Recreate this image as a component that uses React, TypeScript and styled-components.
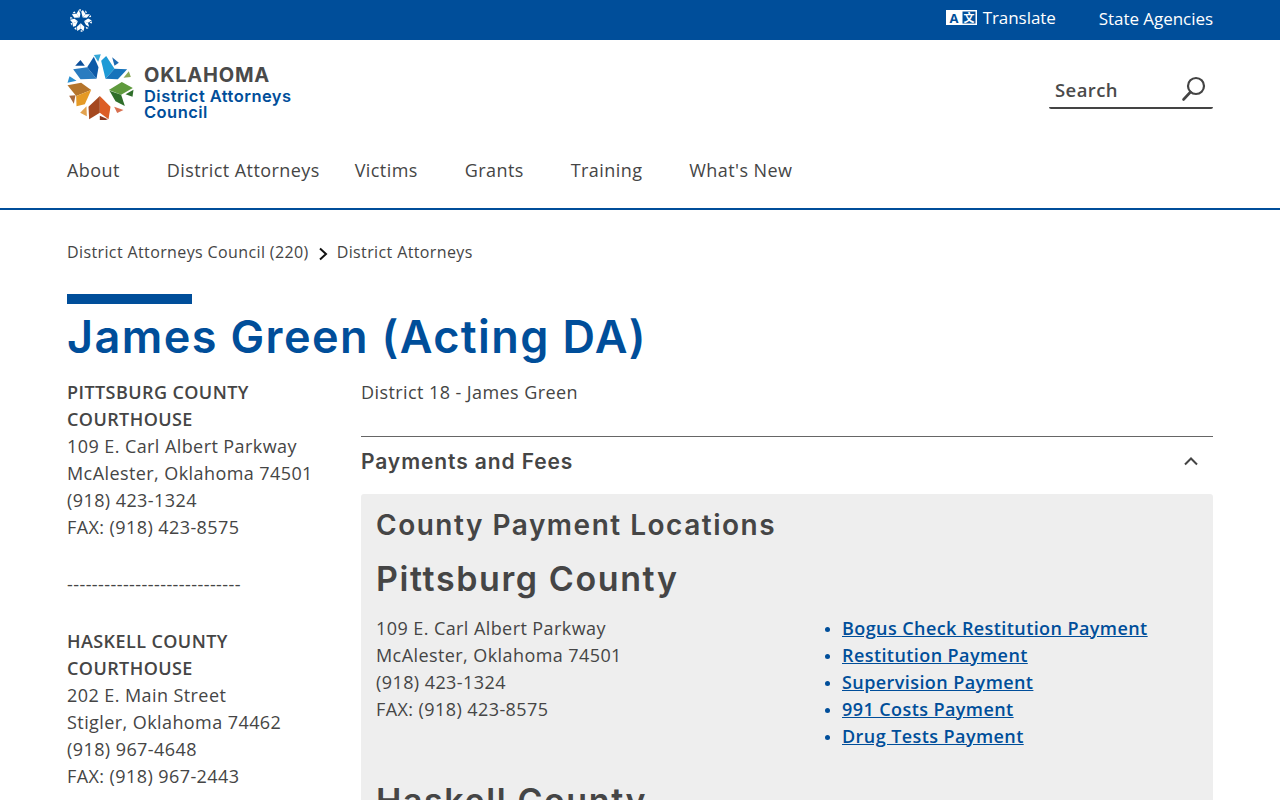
import React from "react";
import styled, { createGlobalStyle } from "styled-components";

const BLUE = "#004e9a";
const TEXT = "#454545";
const HEAD = `Inter, "Liberation Sans", sans-serif`;

const Global = createGlobalStyle`
  html, body { margin: 0; padding: 0; background: #fff; overflow: hidden; }
  body { font-family: "Open Sans", "Liberation Sans", sans-serif; color: ${TEXT}; font-size: 18px; line-height: 27px; }
  * { box-sizing: border-box; }
`;

const TopBar = styled.div`
  height: 40px;
  background: ${BLUE};
  padding: 0 67px;
  display: flex;
  align-items: center;
  justify-content: space-between;
`;
const TopLinks = styled.div`
  display: flex;
  align-items: center;
  gap: 43px;
  color: #fff;
  font-size: 17px;
  letter-spacing: -0.05px;
`;
const TopLink = styled.a<{ $lift: number }>`
  display: flex;
  align-items: center;
  gap: 6px;
  color: #fff;
  margin-top: ${(p) => -p.$lift}px;
`;
const Emblem = styled.svg`
  width: 24px;
  height: 23px;
  margin-left: 2px;
  display: block;
`;

const Header = styled.header`
  padding: 14px 67px 0;
  border-bottom: 2px solid ${BLUE};
  height: 170px;
`;
const HeaderRow = styled.div`
  display: flex;
  justify-content: space-between;
  align-items: flex-start;
  height: 103px;
`;
const Logo = styled.a`
  display: flex;
  align-items: flex-start;
  gap: 10px;
`;
const LogoMark = styled.svg`
  width: 67px;
  height: 66px;
  display: block;
`;
const LogoText = styled.div`
  display: flex;
  flex-direction: column;
  padding-top: 9px;
  font-family: ${HEAD};
  font-weight: 600;
  color: ${BLUE};
  font-size: 16.5px;
  line-height: 16px;
  letter-spacing: 0.45px;
`;
const LogoState = styled.span`
  color: #4a4a4a;
  font-size: 20px;
  font-weight: 700;
  line-height: 25px;
  letter-spacing: 0.75px;
`;
const SearchBox = styled.div`
  width: 164px;
  height: 41px;
  margin-top: 14px;
  border-bottom: 2px solid #444;
  border-radius: 0 0 2px 2px;
  display: flex;
  justify-content: space-between;
  align-items: center;
  padding: 3px 6px 0 6px;
  font-size: 18.5px;
  font-weight: 600;
  letter-spacing: 0.4px;
  color: #4a4a4a;
`;
const Nav = styled.nav`
  display: flex;
  font-size: 18px;
  letter-spacing: 0.42px;
  color: ${TEXT};
`;
const NavItem = styled.a<{ $gap: number }>`
  margin-right: ${(p) => p.$gap}px;
`;

const Main = styled.main`
  padding: 29px 67px 0;
`;
const Crumbs = styled.div`
  display: flex;
  align-items: center;
  font-size: 16px;
  gap: 9px;
  color: ${TEXT};
  letter-spacing: 0.38px;
`;
const CrumbArrow = styled.svg`
  width: 10px;
  height: 14px;
  margin-top: 3px;
`;
const Accent = styled.div`
  width: 125px;
  height: 10px;
  background: ${BLUE};
  margin-top: 28px;
`;
const Title = styled.h1`
  margin: 7px 0 0;
  font-family: ${HEAD};
  font-weight: 600;
  font-size: 45px;
  line-height: 52px;
  color: ${BLUE};
  letter-spacing: 1.4px;
`;
const Columns = styled.div`
  display: grid;
  grid-template-columns: 264px 1fr;
  column-gap: 30px;
  margin-top: 16px;
  letter-spacing: 0.42px;
`;
const Side = styled.aside``;
const SideBlock = styled.p`
  margin: 0 0 30px;
`;
const Rule = styled.p`
  margin: 0 0 30px;
`;
const Strong = styled.strong`
  font-weight: 600;
`;
const Content = styled.div``;
const Lead = styled.p`
  margin: 0 0 30px;
`;
const AccordionHead = styled.div`
  border-top: 1px solid #666;
  height: 58px;
  display: flex;
  justify-content: space-between;
  align-items: center;
  padding: 0 14px 9px 0;
  font-family: ${HEAD};
  font-weight: 600;
  font-size: 21px;
  letter-spacing: 0.9px;
  color: ${TEXT};
`;
const Panel = styled.div`
  background: #eee;
  border-radius: 3px;
  padding: 14px 15px 15px;
`;
const PanelTitle = styled.h2`
  margin: 0 0 17px;
  font-family: ${HEAD};
  font-weight: 600;
  font-size: 28px;
  line-height: 34px;
  letter-spacing: 1.5px;
`;
const County = styled.h3`
  margin: 0 0 16px;
  font-family: ${HEAD};
  font-weight: 600;
  font-size: 34px;
  line-height: 40px;
  letter-spacing: 1.6px;
`;
const CountyRow = styled.div`
  display: grid;
  grid-template-columns: 1fr 1fr;
  column-gap: 70px;
  margin-bottom: 31px;
`;
const Address = styled.p`
  margin: 0;
`;
const Links = styled.ul`
  margin: 0;
  padding: 0 0 0 20px;
  color: ${BLUE};
`;
const LinkItem = styled.li`
  &::marker {
    font-size: 14px;
  }
`;
const PayLink = styled.a`
  color: ${BLUE};
  font-weight: 600;
  text-decoration: underline;
`;

const pieces: [string, string][] = [
  ["38,56 80,50 108,84 60,86", "#2a7cc0"],
  ["80,50 100,18 114,50 108,84", "#0d5aa7"],
  ["44,45 60,28 73,45", "#0d4f9a"],
  ["21,96 27,77 48,90", "#2a8fd0"],
  ["100,13 121,11 113,33", "#35a8d8"],
  ["122,30 137,16 162,54 135,84", "#1e9ad6"],
  ["135,84 162,54 200,56 172,86", "#1673bb"],
  ["155,20 175,36 162,45", "#1d6ab0"],
  ["189,81 205,62 211,79", "#8aa858"],
  ["145,118 184,94 217,112 182,132", "#5f9a3d"],
  ["147,120 182,132 193,166 165,152", "#2f6e2a"],
  ["195,131 219,117 216,138", "#2f6e2a"],
  ["118,136 150,168 144,206 118,186", "#dc5d25"],
  ["118,136 118,186 86,206 84,168", "#a5481f"],
  ["161,168 189,178 170,187", "#d87050"],
  ["118,195 142,206 118,214", "#8a3a20"],
  ["59,186 78,167 79,197", "#e2a24f"],
  ["21,104 62,96 92,118 47,136", "#b5752b"],
  ["47,136 92,118 73,161 48,167", "#e59a26"],
  ["26,135 45,134 40,159", "#a8683a"],
];

const StarMark = ({ white }: { white?: boolean }) => (
  <>
    {pieces.map(([pts, fill]) => (
      <polygon key={pts} points={pts} fill={white ? "#fff" : fill} />
    ))}
  </>
);

const counties = [
  {
    name: "PITTSBURG COUNTY COURTHOUSE",
    lines: ["109 E. Carl Albert Parkway", "McAlester, Oklahoma 74501", "(918) 423-1324", "FAX: (918) 423-8575"],
  },
  {
    name: "HASKELL COUNTY COURTHOUSE",
    lines: ["202 E. Main Street", "Stigler, Oklahoma 74462", "(918) 967-4648", "FAX: (918) 967-2443"],
  },
];

const payments = [
  "Bogus Check Restitution Payment",
  "Restitution Payment",
  "Supervision Payment",
  "991 Costs Payment",
  "Drug Tests Payment",
];

const navItems: [string, number][] = [
  ["About", 47],
  ["District Attorneys", 35],
  ["Victims", 47],
  ["Grants", 47],
  ["Training", 47],
  ["What's New", 0],
];

export default function App() {
  return (
    <>
      <Global />
      <TopBar>
        <Emblem viewBox="14 8 212 206">
          <StarMark white />
        </Emblem>
        <TopLinks>
          <TopLink $lift={5}>
            <svg width="31" height="15" viewBox="0 0 31 15">
              <rect width="16" height="15" fill="#fff" />
              <rect x="15.75" y="0.75" width="14.5" height="13.5" fill="none" stroke="#fff" strokeWidth="1.5" />
              <text x="8" y="12.5" textAnchor="middle" fontSize="13" fontWeight="700" fontFamily="Open Sans" fill={BLUE}>
                A
              </text>
              <text x="23" y="12" textAnchor="middle" fontSize="11" fontWeight="700" fontFamily="Noto Sans CJK SC" fill="#fff">
                文
              </text>
            </svg>
            Translate
          </TopLink>
          <TopLink $lift={4}>State Agencies</TopLink>
        </TopLinks>
      </TopBar>
      <Header>
        <HeaderRow>
          <Logo>
            <LogoMark viewBox="20 10 200 198">
              <StarMark />
            </LogoMark>
            <LogoText>
              <LogoState>OKLAHOMA</LogoState>
              <span>District Attorneys</span>
              <span>Council</span>
            </LogoText>
          </Logo>
          <SearchBox>
            Search
            <svg width="26" height="26" viewBox="0 0 26 26" fill="none" stroke="#444" strokeWidth="2.2">
              <circle cx="15" cy="10" r="8" />
              <path d="M9.5 16 L2.5 23.5" strokeWidth="2.6" strokeLinecap="round" />
            </svg>
          </SearchBox>
        </HeaderRow>
        <Nav>
          {navItems.map(([label, gap]) => (
            <NavItem key={label} $gap={gap}>
              {label}
            </NavItem>
          ))}
        </Nav>
      </Header>
      <Main>
        <Crumbs>
          <span>District Attorneys Council (220)</span>
          <CrumbArrow viewBox="0 0 10 14" fill="none" stroke="#111" strokeWidth="2">
            <path d="M2 1.5 L8 7 L2 12.5" />
          </CrumbArrow>
          <span>District Attorneys</span>
        </Crumbs>
        <Accent />
        <Title>James Green (Acting DA)</Title>
        <Columns>
          <Side>
            {counties.map((c, i) => (
              <React.Fragment key={c.name}>
                <SideBlock>
                  <Strong>{c.name}</Strong>
                  {c.lines.map((l) => (
                    <React.Fragment key={l}>
                      <br />
                      {l}
                    </React.Fragment>
                  ))}
                </SideBlock>
                {i === 0 && <Rule>----------------------------</Rule>}
              </React.Fragment>
            ))}
          </Side>
          <Content>
            <Lead>District 18 - James Green</Lead>
            <AccordionHead>
              Payments and Fees
              <svg width="16" height="10" viewBox="0 0 16 10" fill="none" stroke="#444" strokeWidth="2">
                <path d="M2 8.5 L8 2.5 L14 8.5" />
              </svg>
            </AccordionHead>
            <Panel>
              <PanelTitle>County Payment Locations</PanelTitle>
              <County>Pittsburg County</County>
              <CountyRow>
                <Address>
                  109 E. Carl Albert Parkway
                  <br />
                  McAlester, Oklahoma 74501
                  <br />
                  (918) 423-1324
                  <br />
                  FAX: (918) 423-8575
                </Address>
                <Links>
                  {payments.map((p) => (
                    <LinkItem key={p}>
                      <PayLink>{p}</PayLink>
                    </LinkItem>
                  ))}
                </Links>
              </CountyRow>
              <County>Haskell County</County>
            </Panel>
          </Content>
        </Columns>
      </Main>
    </>
  );
}
